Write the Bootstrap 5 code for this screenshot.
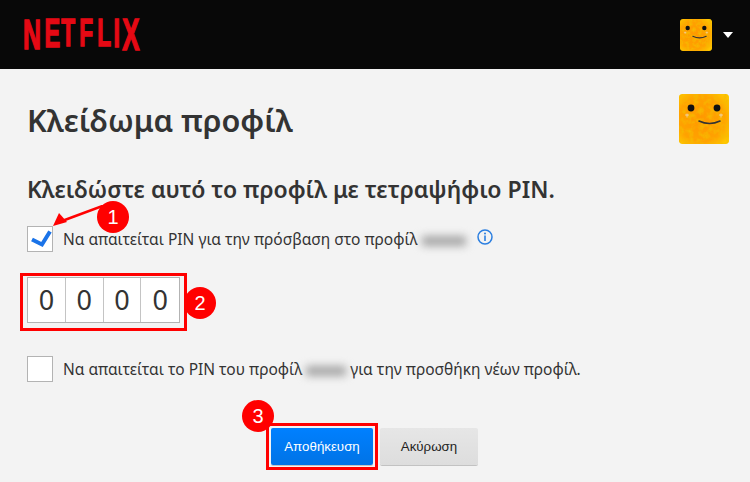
<!DOCTYPE html>
<html lang="el">
<head>
    <meta charset="UTF-8">
    <meta name="viewport" content="width=device-width, initial-scale=1">
    <title>Κλείδωμα προφίλ</title>
    <link href="https://cdn.jsdelivr.net/npm/bootstrap@5.3.0/dist/css/bootstrap.min.css" rel="stylesheet">
    <style>
        body { background: #f3f3f3; color: #333; font-family: "Noto Sans", "Open Sans", sans-serif; width: 750px; height: 482px; overflow: hidden; position: relative; }
        .top-bar { height: 69px; background: #080808; padding: 0 17px 0 23px; }
        .caret-down { width: 0; height: 0; border: 5px solid transparent; border-top: 6px solid #fff; border-bottom: 0; margin-left: 11px; }
        .avatar-sm { width: 32px; height: 32px; display: block; border-radius: 3px; }
        .avatar-lg { width: 50px; height: 50px; display: block; border-radius: 3px; }
        .page-body { padding: 25px 21px 0 27px; }
        .page-title { font-size: 30.6px; font-weight: 600; line-height: 50px; margin: 1px 0 0; color: #333; }
        .page-sub { font-size: 23px; font-weight: 600; line-height: 30px; margin: 29px 0 22px; color: #333; white-space: nowrap; }
        .tick-box { width: 26px; height: 26px; background: #fff; border: 1px solid #b3b3b3; flex: none; margin-right: 10px; }
        .opt-text { font-size: 15.5px; line-height: 26px; color: #333; white-space: nowrap; }
        .smudge { display: inline-block; height: 10px; background: #a5a5a5; filter: blur(4px); vertical-align: middle; }
        .info-ic { margin-top: 2px; margin-left: 2px; }
        .pin-row { margin-top: 25px; width: 153px; height: 46px; background: #fff; border: 1px solid #b3b3b3; }
        .pin-cell { width: 38px; font-size: 27px; line-height: 44px; text-align: center; border-right: 1px solid #c4c4c4; color: #333; }
        .pin-cell:last-child { border-right: 0; }
        .opt-second { margin-top: 33px; }
        .btn-row { margin-top: 46px; padding-left: 244px; gap: 7px; }
        .btn-save, .btn-cancel { font-family: "Liberation Sans", Arial, sans-serif; font-size: 13.3px; border-radius: 2px; padding: 0; border: 0; height: 37px; }
        .btn-save { width: 102px; background: linear-gradient(#0080ff, #0073e6); color: #fff; box-shadow: 0 1px 0 rgba(0,0,0,.2); }
        .btn-cancel { width: 98px; background: linear-gradient(#e6e6e6, #ddd); color: #222; box-shadow: 0 1px 0 rgba(0,0,0,.2); }
        .mark-box { position: absolute; border: 3px solid #f00; }
        .mark-num { position: absolute; width: 32px; height: 32px; border-radius: 50%; background: #f00; color: #fff; font-family: "Liberation Sans", Arial, sans-serif; font-size: 20px; line-height: 32px; text-align: center; }
    </style>
</head>
<body>
    <svg width="0" height="0" class="position-absolute">
        <defs>
            <radialGradient id="fur" cx="45%" cy="50%" r="70%">
                <stop offset="0" stop-color="#ff9800"/>
                <stop offset="0.65" stop-color="#ffa200"/>
                <stop offset="1" stop-color="#ffd000"/>
            </radialGradient>
            <filter id="furNoise" x="0" y="0" width="100%" height="100%">
                <feTurbulence type="fractalNoise" baseFrequency="0.2" numOctaves="3" seed="4"/>
                <feColorMatrix values="0 0 0 0 0.93  0 0 0 0 0.48  0 0 0 0 0  2.2 0 0 0 -0.85"/>
                <feComposite in2="SourceGraphic" operator="in"/>
            </filter>
            <symbol id="face" viewBox="0 0 50 50">
                <rect width="50" height="50" rx="3" fill="url(#fur)"/>
                <rect width="50" height="50" rx="3" fill="#000" filter="url(#furNoise)"/>
                <circle cx="12" cy="14" r="3.400" fill="#111"/>
                <circle cx="38" cy="14" r="3.400" fill="#111"/>
                <path d="M6 21h4M8 19.500v4M40 21h4M42 19.500v4" stroke="#e8e8e8" stroke-width=".8" fill="none" opacity=".8"/>
                <path d="M20 27Q30.500 32 41 27" stroke="#333" stroke-width="1.600" fill="none" stroke-linecap="round"/>
            </symbol>
        </defs>
    </svg>

    <nav class="top-bar d-flex align-items-center justify-content-between">
        <svg width="120" height="52" viewBox="0 -8.500 120 52" role="img" aria-label="Netflix">
            <text transform="scale(.58 1)" font-family="Liberation Sans" font-weight="700" fill="#e50914" stroke="#e50914" stroke-width="1.500"><tspan x="0" y="31" font-size="43">N</tspan><tspan x="37" y="29" font-size="40.500">E</tspan><tspan x="66" y="28" font-size="39">T</tspan><tspan x="97" y="28" font-size="39">F</tspan><tspan x="128" y="28" font-size="39">L</tspan><tspan x="156" y="29" font-size="40.500">I</tspan><tspan x="171" y="32" font-size="44.500">X</tspan></text>
        </svg>
        <div class="d-flex align-items-center">
            <svg class="avatar-sm"><use href="#face"/></svg>
            <span class="caret-down"></span>
        </div>
    </nav>

    <main class="page-body">
        <div class="d-flex justify-content-between align-items-start">
            <h1 class="page-title">Κλείδωμα προφίλ</h1>
            <svg class="avatar-lg"><use href="#face"/></svg>
        </div>
        <h2 class="page-sub">Κλειδώστε αυτό το προφίλ με τετραψήφιο PIN.</h2>

        <div class="d-flex align-items-start">
            <span class="tick-box d-flex">
                <svg width="24" height="24" viewBox="0 0 24 24"><path d="M4 12.500l10 5L22 4.500" fill="none" stroke="#1a73e8" stroke-width="4"/></svg>
            </span>
            <span class="opt-text">Να απαιτείται PIN για την πρόσβαση στο προφίλ<span class="smudge ms-1 me-2" style="width:44px"></span></span>
            <svg class="info-ic" width="18" height="18" viewBox="0 0 18 18">
                <circle cx="9" cy="9" r="7" fill="none" stroke="#2c7fe0" stroke-width="1.500"/>
                <circle cx="9" cy="5.500" r="1" fill="#2c7fe0"/>
                <rect x="8.200" y="7.500" width="1.600" height="5.500" fill="#2c7fe0"/>
            </svg>
        </div>

        <div class="pin-row d-flex">
            <div class="pin-cell">0</div>
            <div class="pin-cell">0</div>
            <div class="pin-cell">0</div>
            <div class="pin-cell">0</div>
        </div>

        <div class="d-flex opt-second">
            <span class="tick-box"></span>
            <span class="opt-text">Να απαιτείται το PIN του προφίλ<span class="smudge mx-1" style="width:40px"></span>για την προσθήκη νέων προφίλ.</span>
        </div>

        <div class="d-flex btn-row">
            <button class="btn btn-save" type="button">Αποθήκευση</button>
            <button class="btn btn-cancel" type="button">Ακύρωση</button>
        </div>
    </main>

    <svg class="position-absolute" style="left:50px;top:205px" width="70" height="45" viewBox="0 0 70 45">
        <path d="M55 0L12 16" stroke="#f00" stroke-width="2.500" fill="none"/>
        <path d="M3 21L9 8L17 17Z" fill="#f00"/>
    </svg>
    <div class="mark-num" style="left:97px;top:201px">1</div>
    <div class="mark-box" style="left:20px;top:273px;width:167px;height:58px"></div>
    <div class="mark-num" style="left:184px;top:287px">2</div>
    <div class="mark-box" style="left:266px;top:423px;width:112px;height:47px"></div>
    <div class="mark-num" style="left:242px;top:400px">3</div>

    <script src="https://cdn.jsdelivr.net/npm/bootstrap@5.3.0/dist/js/bootstrap.bundle.min.js"></script>
</body>
</html>
